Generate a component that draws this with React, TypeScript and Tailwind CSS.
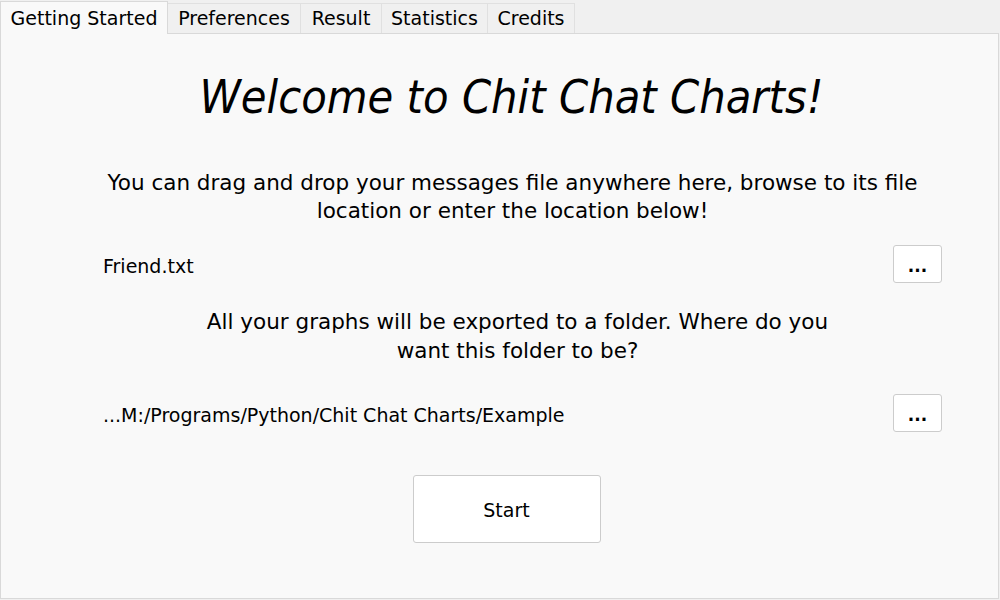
import React from "react";

const tabs = [
  { label: "Preferences", w: "w-[133px]" },
  { label: "Result", w: "w-[81px]" },
  { label: "Statistics", w: "w-[106px]" },
  { label: "Credits", w: "w-[87px]" },
];

export default function App() {
  return (
    <div className="w-[1000px] h-[600px] bg-[#f0f0f0] text-black font-['DejaVu_Sans',sans-serif] flex flex-col overflow-hidden">
      <div className="flex items-end h-[33px] shrink-0">
        <div className="w-[168px] h-[33px] bg-[#f9f9f9] border border-b-0 border-[#d9d9d9] relative z-10 -mb-px flex items-center justify-center text-[19px]">
          Getting Started
        </div>
        {tabs.map((t) => (
          <div
            key={t.label}
            className={`${t.w} h-[30px] bg-[#f0f0f0] border-t border-r border-[#e0e0e0] flex items-center justify-center text-[19px]`}
          >
            {t.label}
          </div>
        ))}
      </div>
      <div className="flex-1 bg-[#f9f9f9] border border-[#d9d9d9] mr-[1px] mb-[1px] flex flex-col">
        <div className="mt-[35px] h-[56px] leading-[56px] text-center pl-[24px] text-[46.5px] italic font-['DejaVu_Sans_Condensed','DejaVu_Sans',sans-serif] [font-stretch:condensed]">
          Welcome to Chit Chat Charts!
        </div>
        <div className="mt-[44px] text-center pl-[26px] text-[21.5px] leading-[28px]">
          You can drag and drop your messages file anywhere here, browse to its file
          <br />
          location or enter the location below!
        </div>
        <div className="mt-[20px] flex items-center pl-[102px] pr-[56px] h-[38px]">
          <span className="flex-1 text-[19px] pt-[4px]">Friend.txt</span>
          <button className="w-[49px] h-[38px] bg-white border border-[#cccccc] rounded-[3px] text-[17px] font-bold pt-[5px]">...</button>
        </div>
        <div className="mt-[24px] flex justify-center pl-[36px]">
          <div className="text-center text-[21.5px] leading-[29px]">
            All your graphs will be exported to a folder. Where do you
            <br />
            want this folder to be?
          </div>
        </div>
        <div className="mt-[29px] flex items-center pl-[102px] pr-[56px] h-[38px]">
          <span className="flex-1 text-[19px] pt-[4px]">...M:/Programs/Python/Chit Chat Charts/Example</span>
          <button className="w-[49px] h-[38px] bg-white border border-[#cccccc] rounded-[3px] text-[17px] font-bold pt-[5px]">...</button>
        </div>
        <div className="mt-[43px] flex justify-center pl-[14px]">
          <button className="w-[188px] h-[68px] bg-white border border-[#cccccc] rounded-[3px] text-[19px] pt-[3px]">Start</button>
        </div>
      </div>
    </div>
  );
}
